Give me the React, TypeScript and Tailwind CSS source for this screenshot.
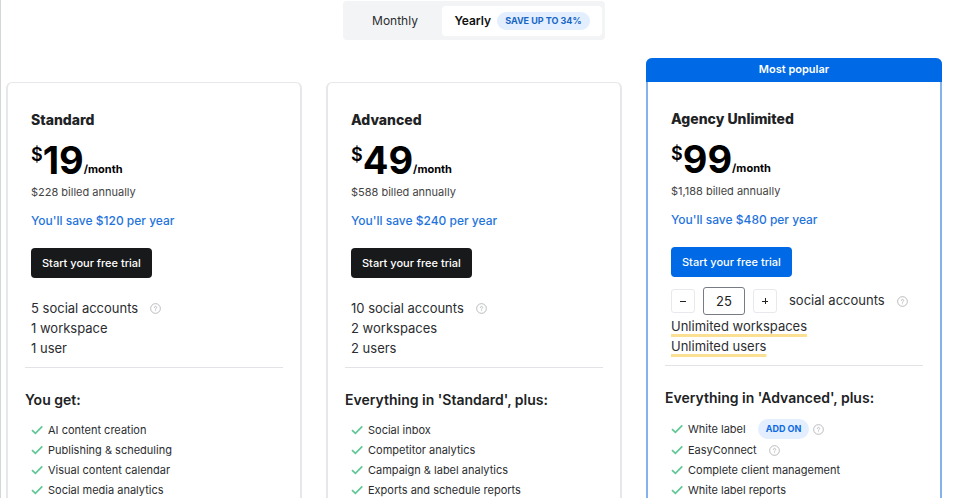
import { useState } from "react";

type Feature = { label: string; addOn?: boolean; help?: boolean };

type Plan = {
  name: string;
  price: number;
  billed: string;
  saving: string;
  accounts?: string;
  limits: string[];
  heading: string;
  features: Feature[];
  popular?: boolean;
};

const plans: Plan[] = [
  {
    name: "Standard",
    price: 19,
    billed: "$228 billed annually",
    saving: "You'll save $120 per year",
    accounts: "5 social accounts",
    limits: ["1 workspace", "1 user"],
    heading: "You get:",
    features: [
      { label: "AI content creation" },
      { label: "Publishing & scheduling" },
      { label: "Visual content calendar" },
      { label: "Social media analytics" },
    ],
  },
  {
    name: "Advanced",
    price: 49,
    billed: "$588 billed annually",
    saving: "You'll save $240 per year",
    accounts: "10 social accounts",
    limits: ["2 workspaces", "2 users"],
    heading: "Everything in 'Standard', plus:",
    features: [
      { label: "Social inbox" },
      { label: "Competitor analytics" },
      { label: "Campaign & label analytics" },
      { label: "Exports and schedule reports" },
    ],
  },
  {
    name: "Agency Unlimited",
    price: 99,
    billed: "$1,188 billed annually",
    saving: "You'll save $480 per year",
    limits: ["Unlimited workspaces", "Unlimited users"],
    heading: "Everything in 'Advanced', plus:",
    features: [
      { label: "White label", addOn: true, help: true },
      { label: "EasyConnect", help: true },
      { label: "Complete client management" },
      { label: "White label reports" },
    ],
    popular: true,
  },
];

function HelpIcon() {
  return (
    <svg viewBox="0 0 12 12" className="size-[11px] shrink-0" fill="none" stroke="#b4b6ba" role="img" aria-label="Help">
      <circle cx="6" cy="6" r="5.3" strokeWidth="1" />
      <path d="M4.7 4.9a1.3 1.3 0 1 1 1.9 1.2c-.4.2-.6.4-.6.8" strokeWidth="0.9" strokeLinecap="round" />
      <circle cx="6" cy="8.5" r="0.3" strokeWidth="0.5" />
    </svg>
  );
}

function CheckIcon() {
  return (
    <svg viewBox="0 0 12 10" className="h-[10px] w-3 shrink-0" fill="none" stroke="#5fc795" strokeWidth="1.7" aria-hidden="true">
      <path d="M1 5.2 4.4 8.4 11.3 1.4" />
    </svg>
  );
}

function AccountStepper() {
  const [count, setCount] = useState("25");
  const step = (by: number) => setCount(String(Math.max(1, Number(count) + by)));
  const stepButton =
    "flex size-[24px] items-center justify-center rounded-[3px] border border-[#e8e9ec] text-[#222]";
  return (
    <div className="mt-[10px] flex items-center">
      <button type="button" aria-label="Fewer accounts" className={stepButton} onClick={() => step(-1)}>
        <svg viewBox="0 0 8 8" className="size-2" stroke="currentColor" strokeWidth="1">
          <path d="M1 4.5h6" />
        </svg>
      </button>
      <input
        id="account-count"
        value={count}
        onChange={(e) => setCount(e.target.value)}
        className="mx-2 h-7 w-[42px] rounded-[3px] border border-[#777b84] text-center text-[13px] text-[#222]"
      />
      <button type="button" aria-label="More accounts" className={stepButton} onClick={() => step(1)}>
        <svg viewBox="0 0 8 8" className="size-2" stroke="currentColor" strokeWidth="1">
          <path d="M1 4.5h6M4.5 1v6" />
        </svg>
      </button>
      <label htmlFor="account-count" className="mx-3 text-[13px]">
        social accounts
      </label>
      <HelpIcon />
    </div>
  );
}

function PlanCard({ plan }: { plan: Plan }) {
  const { popular } = plan;
  return (
    <article
      className={
        popular
          ? "rounded-md border-x-2 border-b-2 border-[#86b2ec]"
          : "mt-6 rounded-md border-2 border-t border-[#e6e7ea]"
      }
    >
      {popular && (
        <div className="-mx-[2px] h-6 rounded-t-md bg-[#0069e6] text-center text-[11px] leading-[22px] font-semibold text-white">
          Most popular
        </div>
      )}
      <div className="px-[17px] pt-[25px] pb-6">
        <div className="px-[6px]">
          <h2 className="text-[14px] leading-6 font-extrabold text-[#202224]">{plan.name}</h2>
          <div className="mt-2 flex h-10 text-black">
            <span className="pt-[3px] text-[18px] leading-6 font-semibold">$</span>
            <span className="text-[38px] leading-10 font-bold">{plan.price}</span>
            <span className="self-end pb-px text-[11px] leading-5 font-bold">/month</span>
          </div>
          <p className="mt-[2px] text-[11px] leading-5 text-[#444]">{plan.billed}</p>
          <p className="mt-[9px] text-[12px] leading-5 font-medium text-[#1f74dc]">{plan.saving}</p>
          <button
            type="button"
            className={`mt-[17px] h-[30px] rounded px-[11px] text-[11px] font-medium text-white ${popular ? "bg-[#0069e6]" : "bg-[#18191a]"}`}
          >
            Start your free trial
          </button>
          {popular && <AccountStepper />}
          <ul className={`text-[13px] leading-5 ${popular ? "mt-px" : "mt-5"}`}>
            {plan.accounts && (
              <li className="flex items-center gap-3">
                {plan.accounts}
                <HelpIcon />
              </li>
            )}
            {plan.limits.map((limit) => (
              <li key={limit}>
                {popular ? (
                  <span className="underline decoration-[#fbe093] decoration-3 underline-offset-3">{limit}</span>
                ) : (
                  limit
                )}
              </li>
            ))}
          </ul>
        </div>
        <hr className="mt-[9px] border-[#e1e3e6]" />
        <h3 className="mt-5 text-[14px] leading-6 font-semibold text-[#202224]">{plan.heading}</h3>
        <ul className="mt-2 px-[6px] text-[11px] leading-5">
          {plan.features.map((feature) => (
            <li key={feature.label} className={`flex items-center ${feature.addOn ? "h-[22px]" : "h-5"}`}>
              <CheckIcon />
              <span className="ml-[5px]">{feature.label}</span>
              {feature.addOn && (
                <span className="ml-3 rounded-full bg-[#e3efff] px-2 text-[9px] font-bold text-[#0d6ae0]">
                  ADD ON
                </span>
              )}
              {feature.help && (
                <span className={feature.addOn ? "ml-1" : "ml-3"}>
                  <HelpIcon />
                </span>
              )}
            </li>
          ))}
        </ul>
      </div>
    </article>
  );
}

export default function App() {
  const [yearly, setYearly] = useState(true);
  return (
    <main className="h-screen overflow-hidden border-l border-[#d4d6d8] bg-white pt-px pr-4 pl-[5px] font-['Inter',sans-serif] text-[#2b2d30]">
      <div className="flex justify-center">
        <div className="flex rounded bg-[#f3f4f5] pt-[5px] pr-[3px] pb-1 pl-[5px]">
          <button
            type="button"
            aria-pressed={!yearly}
            onClick={() => setYearly(false)}
            className="w-[94px] text-[12px]"
          >
            Monthly
          </button>
          <button
            type="button"
            aria-pressed={yearly}
            onClick={() => setYearly(true)}
            className="flex h-[30px] w-[160px] items-center justify-center gap-[6px] rounded bg-white text-[12px] font-semibold text-[#111]"
          >
            Yearly
            <span className="rounded-full bg-[#e3efff] px-2 text-[9px] leading-[18px] font-bold text-[#1766c4]">
              SAVE UP TO 34%
            </span>
          </button>
        </div>
      </div>
      <div className="mt-[18px] grid grid-cols-3 gap-6">
        {plans.map((plan) => (
          <PlanCard key={plan.name} plan={plan} />
        ))}
      </div>
    </main>
  );
}
